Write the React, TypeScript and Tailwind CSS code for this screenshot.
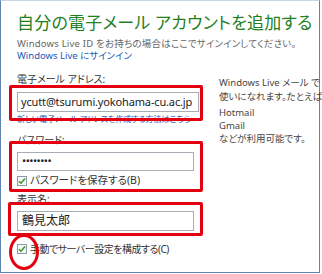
import React from "react";

const jp = { fontFamily: '"Noto Sans", "Noto Sans CJK JP", sans-serif' };

function Check({ className = "" }: { className?: string }) {
  return (
    <span className={`inline-flex items-center justify-center w-[10px] h-[10px] border border-[#8f9aa6] bg-[#f4f6f8] shrink-0 ${className}`}>
      <svg width="8" height="8" viewBox="0 0 8 8">
        <path d="M1 4.2 L3 6.2 L7 1.6" fill="none" stroke="#3a9a2a" strokeWidth="1.6" />
      </svg>
    </span>
  );
}

export default function App() {
  return (
    <div className="w-[322px] h-[274px] bg-white overflow-hidden [font-feature-settings:'palt']" style={jp}>
      <div className="relative w-[320px] h-[273px] border border-[#5f84ad] border-t-[#c9d5e2] pl-[16px] pt-[10px]">
        <div className="text-[17px] leading-[24px] text-[#23801f] tracking-[0.2px] whitespace-nowrap">
          自分の電子メール アカウントを追加する
        </div>
        <div className="text-[9.5px] leading-[12px] text-[#666] mt-[3px] whitespace-nowrap tracking-[0.2px]">
          Windows Live ID をお持ちの場合はここでサインインしてください。
        </div>
        <div className="text-[9.5px] leading-[12px] text-[#2359b6] whitespace-nowrap">
          Windows Live にサインイン
        </div>
        <div className="flex mt-[11px]">
          <div className="w-[202px] shrink-0 flex flex-col">
            <div className="text-[10px] leading-[13px] text-[#333] whitespace-nowrap">電子メール アドレス:</div>
            <div className="mt-[6px] w-[182px] h-[20px] border border-[#a7aeb6] flex items-center pl-[3px] text-[11px] text-[#222] whitespace-nowrap overflow-hidden tracking-[-0.15px]">
              ycutt@tsurumi.yokohama-cu.ac.jp
            </div>
            <div className="text-[8px] leading-[12px] text-[#2359b6] whitespace-nowrap mt-[1px]">
              新しい電子メール アドレスを作成する方法はこちら
            </div>
            <div className="text-[10px] leading-[13px] text-[#333] mt-[9px]">パスワード:</div>
            <div className="mt-[5px] w-[177px] h-[19px] border border-[#a7aeb6] flex items-center pl-[4px] text-[11px] text-[#222] tracking-[-0.5px]">
              ••••••••
            </div>
            <div className="flex items-center mt-[3px] h-[14px] text-[10.5px] text-[#333] whitespace-nowrap">
              <Check />
              <span className="ml-[3px]">パスワードを保存する(B)</span>
            </div>
            <div className="text-[10px] leading-[13px] text-[#333] mt-[5px]">表示名:</div>
            <div className="mt-[5px] w-[177px] h-[20px] border border-[#a7aeb6] flex items-center pl-[4px] text-[12px] text-[#222]">
              鶴見太郎
            </div>
            <div className="flex items-center mt-[11px] h-[14px] text-[10px] tracking-[-0.5px] text-[#333] whitespace-nowrap">
              <Check />
              <span className="ml-[3px]">手動でサーバー設定を構成する(C)</span>
            </div>
          </div>
          <div className="flex flex-col text-[9.5px] leading-[13px] text-[#444] whitespace-nowrap">
            <div className="mt-[3px]">Windows Live メール で</div>
            <div className="mt-[1px]">使いになれます。たとえば</div>
            <div className="mt-[3px]">Hotmail</div>
            <div>Gmail</div>
            <div>などが利用可能です。</div>
          </div>
        </div>

        <div className="absolute left-[8px] top-[84px] w-[194px] h-[36px] border-[3px] border-[#e40010] rounded-[2px]" />
        <div className="absolute left-[8px] top-[140px] w-[194px] h-[51px] border-[3px] border-[#e40010] rounded-[2px]" />
        <div className="absolute left-[7px] top-[201px] w-[195px] h-[34px] border-[3px] border-[#e40010] rounded-[2px]" />
        <div className="absolute left-[8px] top-[233px] w-[30px] h-[36px] border-[3px] border-[#e40010] rounded-[50%]" />
      </div>
    </div>
  );
}
